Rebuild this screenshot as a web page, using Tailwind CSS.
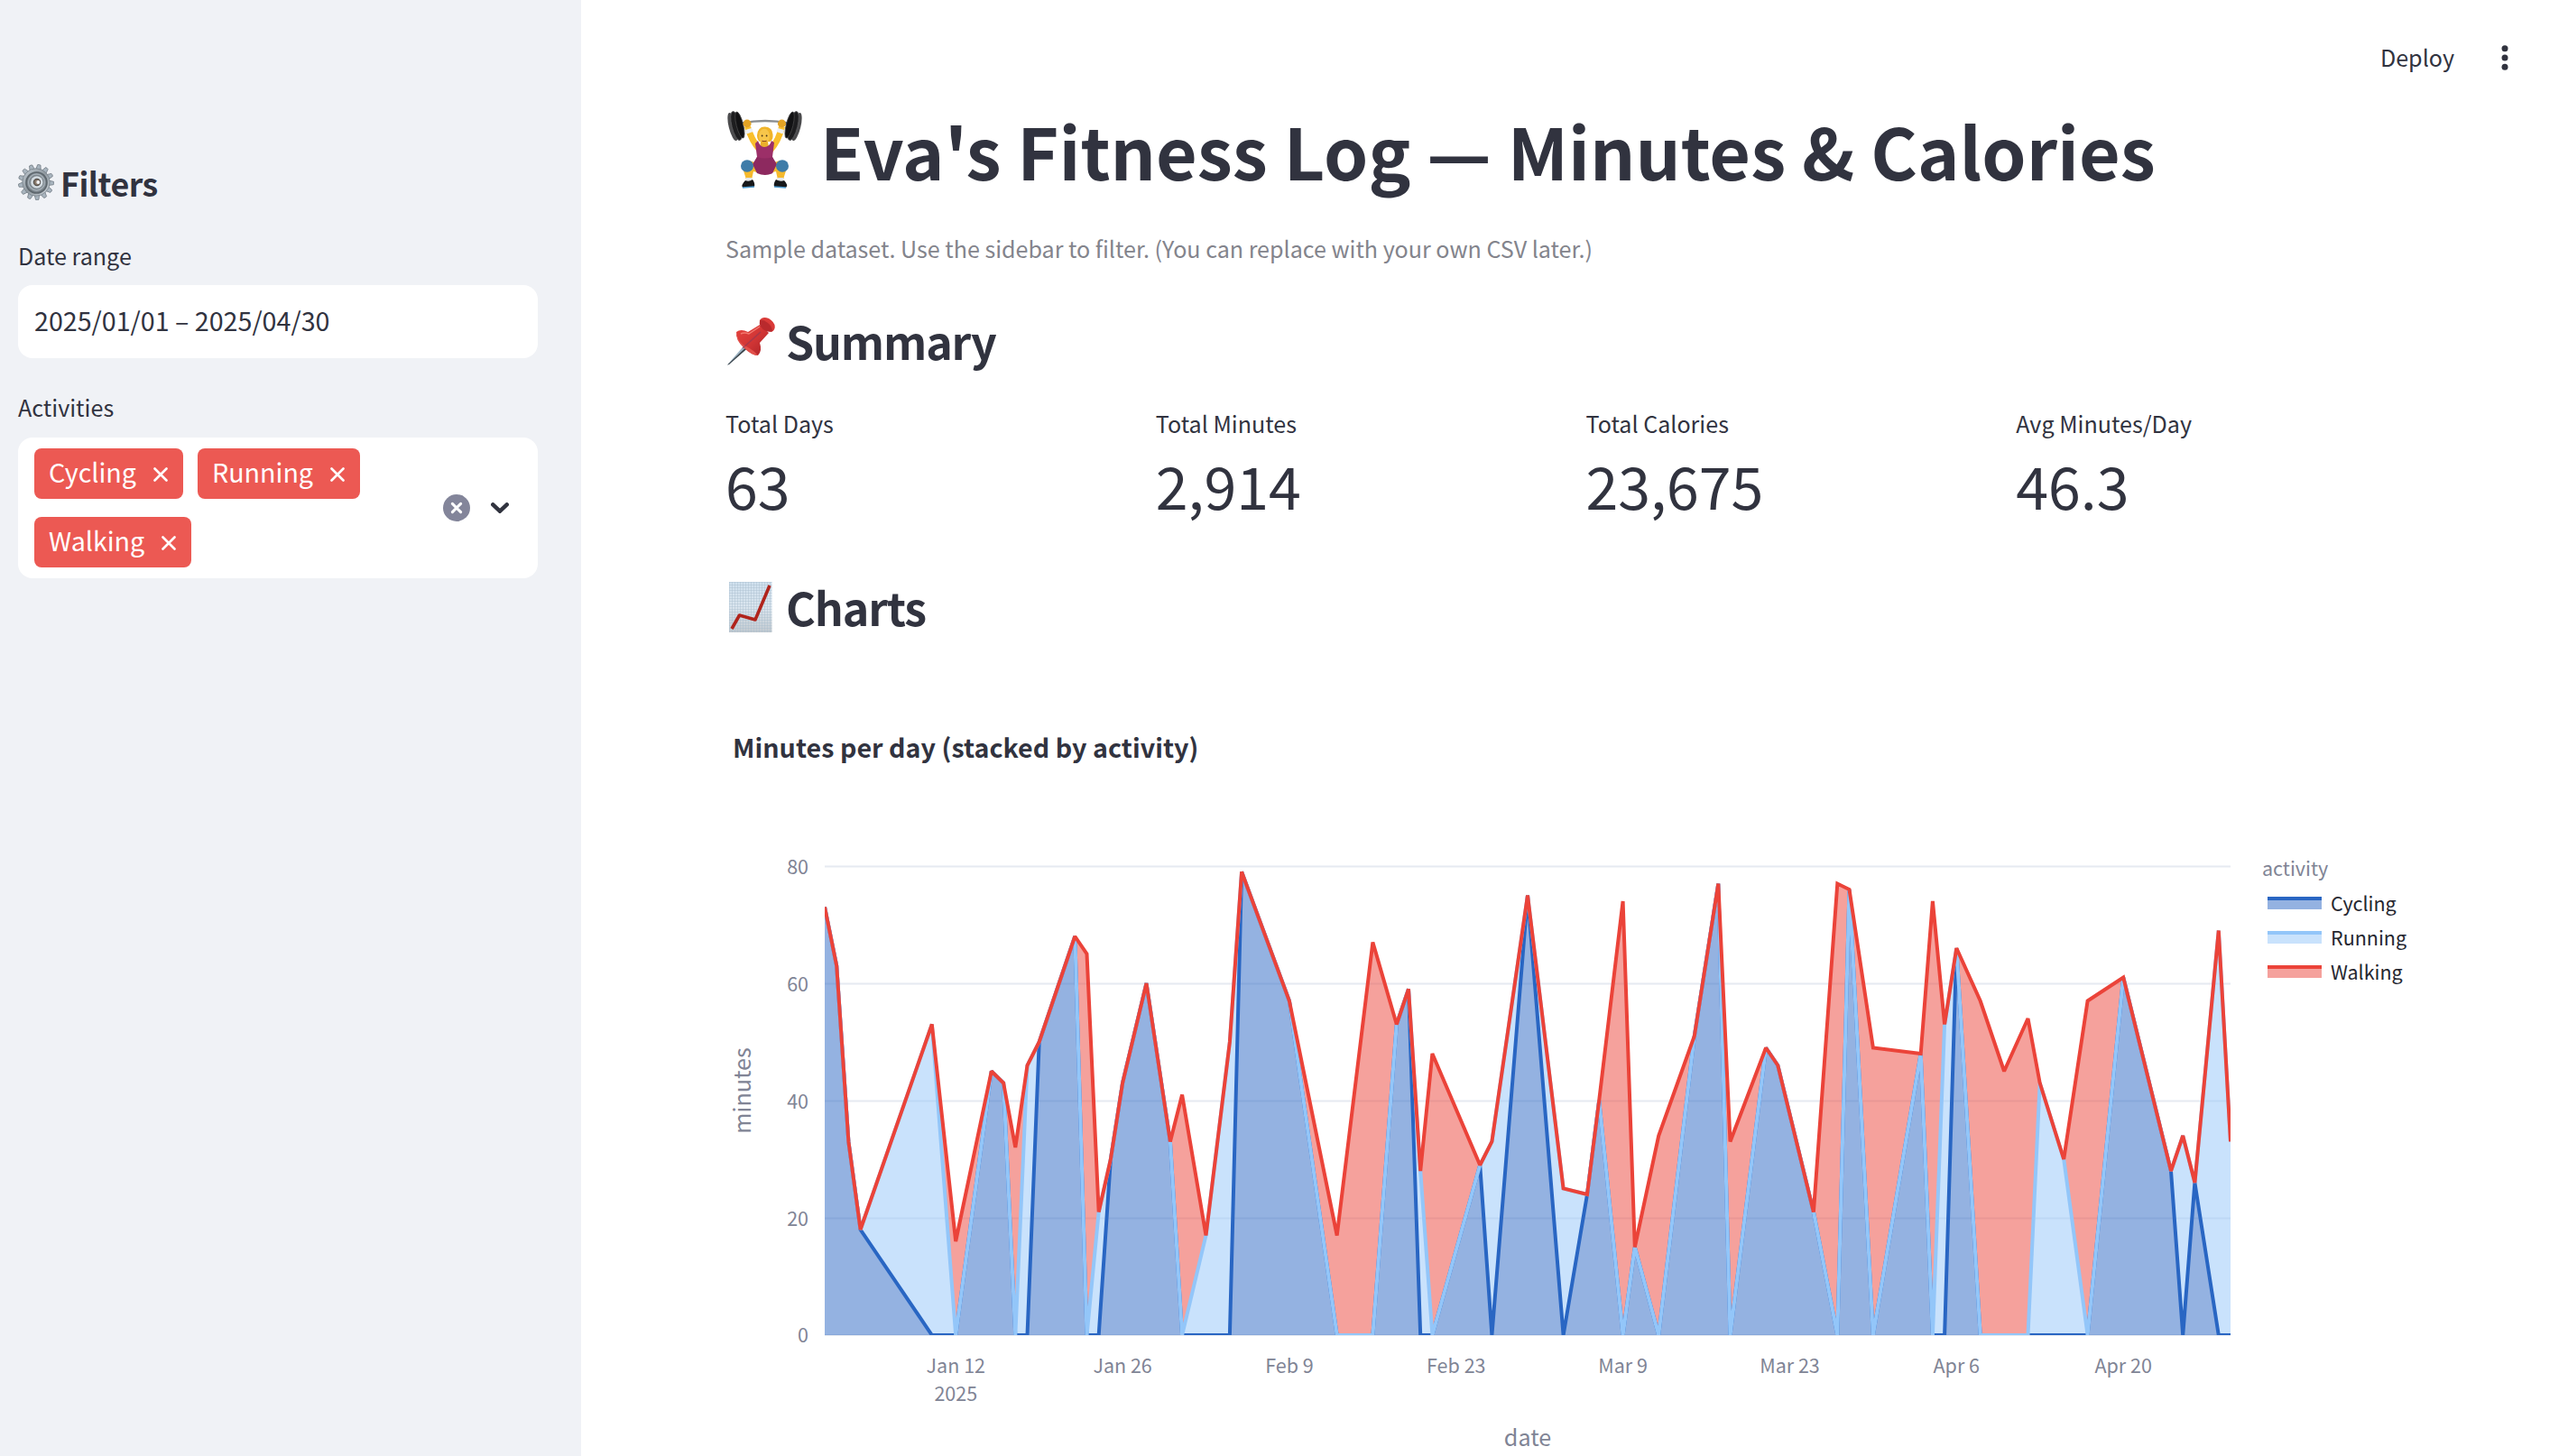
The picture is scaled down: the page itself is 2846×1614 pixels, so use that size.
<!DOCTYPE html>
<html lang="en">
<head>
<meta charset="utf-8">
<title>Eva's Fitness Log</title>
<script src="https://cdn.jsdelivr.net/npm/@tailwindcss/browser@4"></script>
</head>
<body class="bg-white">
<div class="flex w-[2846px] h-[1614px] overflow-hidden bg-white text-[#31333f] font-['Noto_Sans_CJK_SC','Noto_Sans',sans-serif]">

  <aside class="w-[644px] h-full shrink-0 bg-[#f0f2f6] pl-5 pr-12 pt-[178px]">
    <h2 class="flex items-center h-12 leading-[48px] text-[35.8px] font-bold whitespace-nowrap tracking-[-0.5px]">
      <svg class="size-10 mr-[7px]" viewBox="0 0 40 40">
        <defs>
          <linearGradient id="gearBody" x1="0" y1="0" x2="1" y2="1"><stop offset="0" stop-color="#c3ccd4"/><stop offset=".5" stop-color="#8f989f"/><stop offset="1" stop-color="#d5dce2"/></linearGradient>
        </defs>
        <g id="gearTeeth" fill="#a9b5bf" stroke="#5f6870" stroke-width=".6"></g>
        <circle cx="20" cy="20" r="15.2" fill="url(#gearBody)" stroke="#77818a" stroke-width=".8"/>
        <circle cx="20.5" cy="20.5" r="11.5" fill="#7d868d" stroke="#5c656c" stroke-width="1.6"/>
        <circle cx="20.5" cy="20" r="9" fill="none" stroke="#a5afb7" stroke-width="1.4"/>
        <circle cx="20.8" cy="20" r="6.8" fill="#d3dbe1"/>
        <circle cx="21" cy="20" r="3.6" fill="#8a7a6c" stroke="#55504c" stroke-width="1.2"/>
        <circle cx="22.3" cy="20" r="2" fill="#f0f2f6"/>
      </svg>
      <span>Filters</span>
    </h2>
    <div class="mt-[37px] h-10 leading-10 text-[25.1px]">Date range</div>
    <div class="mt-[13px] h-[81px] rounded-2xl bg-white px-[18px] pb-0.5 flex items-center text-[28.65px] whitespace-nowrap">2025/01/01 – 2025/04/30</div>
    <div class="mt-[34px] h-10 leading-10 text-[25.1px]">Activities</div>
    <div class="mt-[14px] h-[156px] rounded-2xl bg-white pl-[18px] pr-8 flex items-center">
      <div class="flex flex-wrap gap-x-4 gap-y-5 w-[440px] text-[28.65px] leading-[51px] text-white">
        <div class="h-14 w-[165px] rounded-lg bg-[#ec5953] pl-4 pr-[17px] flex justify-between items-start"><span>Cycling</span><svg class="size-4 mt-[21px]" viewBox="0 0 16 16"><path d="M1.5 1.5l13 13M14.5 1.5l-13 13" stroke="#fff" stroke-width="2.6" stroke-linecap="round"/></svg></div>
        <div class="h-14 w-[180px] rounded-lg bg-[#ec5953] pl-4 pr-[17px] flex justify-between items-start"><span>Running</span><svg class="size-4 mt-[21px]" viewBox="0 0 16 16"><path d="M1.5 1.5l13 13M14.5 1.5l-13 13" stroke="#fff" stroke-width="2.6" stroke-linecap="round"/></svg></div>
        <div class="h-14 w-[174px] rounded-lg bg-[#ec5953] pl-4 pr-[17px] flex justify-between items-start"><span>Walking</span><svg class="size-4 mt-[21px]" viewBox="0 0 16 16"><path d="M1.5 1.5l13 13M14.5 1.5l-13 13" stroke="#fff" stroke-width="2.6" stroke-linecap="round"/></svg></div>
      </div>
      <svg class="size-[30px] ml-[13px]" viewBox="0 0 30 30"><circle cx="15" cy="15" r="15" fill="#83859a"/><path d="M10.4 10.4l9.2 9.2M19.6 10.4l-9.2 9.2" stroke="#fff" stroke-width="3" stroke-linecap="round"/></svg>
      <svg class="w-5 h-3 ml-[23px]" viewBox="0 0 20 12"><path d="M2.3 2.3l7.7 7.4 7.7-7.4" fill="none" stroke="#31333f" stroke-width="4.4" stroke-linecap="round" stroke-linejoin="miter"/></svg>
    </div>
  </aside>

  <main class="flex-1 pl-40 flex flex-col">
    <header class="h-[113px] flex justify-end pr-[66px] pt-[43px] text-[25.1px] leading-10">
      <span class="mr-[52px]">Deploy</span>
      <svg class="w-2 h-[30px] mt-[6px]" viewBox="0 0 8 30" fill="#31333f"><circle cx="4" cy="4.7" r="3.5"/><circle cx="4" cy="15" r="3.5"/><circle cx="4" cy="25.2" r="3.5"/></svg>
    </header>

    <h1 class="flex items-center h-[106px] leading-[106px] text-[78.8px] font-bold whitespace-nowrap">
      <svg class="w-[84px] h-[88px] ml-[2px] mr-[19px]" viewBox="0 0 84 88">
        <path d="M16 14.5Q42 9.5 68 14.5" fill="none" stroke="#8a8d90" stroke-width="2.6"/>
        <path d="M13 15h7M64 15h7" stroke="#2f5fb8" stroke-width="3"/>
        <g transform="rotate(-14 10 17.500)"><ellipse cx="6" cy="17.5" rx="4.4" ry="16" fill="#4b4b4d"/><ellipse cx="10" cy="17.5" rx="5" ry="16.5" fill="#1d1d1f" stroke="#5a5a5c" stroke-width=".8"/><ellipse cx="14" cy="17.5" rx="3.8" ry="15" fill="#121214" stroke="#444" stroke-width=".8"/></g>
        <g transform="rotate(14 73 17.500)"><ellipse cx="77" cy="17.5" rx="4.4" ry="16" fill="#4b4b4d"/><ellipse cx="73" cy="17.5" rx="5" ry="16.5" fill="#1d1d1f" stroke="#5a5a5c" stroke-width=".8"/><ellipse cx="69" cy="17.5" rx="3.8" ry="15" fill="#121214" stroke="#444" stroke-width=".8"/></g>
        <path d="M19 19L26 18Q30 31 36 38L34 47Q24 36 19 19Z" fill="#f9bf2c"/>
        <path d="M64 19L57 18Q54 31 48 38L50 47Q60 36 64 19Z" fill="#f9bf2c"/>
        <path d="M20 22l7-2 1.5 4-7 2.5zM63 22l-7-2-1.5 4 7 2.5z" fill="#eef1f5"/>
        <ellipse cx="22" cy="15" rx="4.6" ry="4.4" fill="#e3a325"/><ellipse cx="60.5" cy="15" rx="4.6" ry="4.4" fill="#e3a325"/>
        <path d="M33 28Q34 18 42 18.5Q50 19 50.5 27Q51 33 47.5 35L36 35Q33 33 33 28Z" fill="#f0b429"/>
        <ellipse cx="41" cy="29" rx="6" ry="8.3" fill="#f7c64a"/>
        <circle cx="38.6" cy="28.5" r=".9" fill="#4a3418"/><circle cx="43.6" cy="28.5" r=".9" fill="#4a3418"/>
        <path d="M38.5 33.5q2.5 1 5 0v1.5q-2.5 1.500-5 0z" fill="#8c4a20"/>
        <path d="M37 35h8l1 6h-10z" fill="#eab02c"/>
        <path d="M24 56Q17 58 17 64L21 77H27L29 68L36 70H47L54 68L56 77H62L66 64Q65 57 58 56L49 59H34Z" fill="#f5b92c"/>
        <path d="M34 34Q36 41 41 41Q47 41 49 34L52 36L50 52L53 60L50 70Q42 73 33 69L29 60L33 52L31 37Z" fill="#9c2f68"/>
        <path d="M33 52Q42 55 50 52L55 60L50 70Q42 74 33 70L28 60Z" fill="#8d295f"/>
        <ellipse cx="22" cy="62" rx="7" ry="6.8" fill="#3e7ca8"/><ellipse cx="61" cy="62" rx="7" ry="6.8" fill="#3e7ca8"/>
        <path d="M21 75h6v5h-6zM56 75h6v5h-6z" fill="#e4e8ec"/>
        <path d="M20 78Q24 80 28 77Q31 81 30 85L17 86Q15 83 20 78ZM63 78Q59 80 54 77Q51 81 52 85L65 86Q68 83 63 78Z" fill="#17181a"/>
        <path d="M17 86L30 85M65 86L52 85" stroke="#4d9bd0" stroke-width="1.6"/>
      </svg>
      <span>Eva's Fitness Log — Minutes &amp; Calories</span>
    </h1>
    <p class="mt-[34px] h-11 leading-[44px] text-[25.1px] text-[#83848c] whitespace-nowrap tracking-[-0.02px]">Sample dataset. Use the sidebar to filter. (You can replace with your own CSV later.)</p>

    <h2 class="mt-[46px] flex items-center h-[68px] leading-[68px] text-[50.1px] font-bold tracking-[-1.15px]">
      <svg class="w-[54px] h-[54px] ml-px mt-[2px] mr-3" viewBox="0 0 54 54">
        <defs><linearGradient id="pin" x1="0" y1="0" x2="1" y2="1"><stop offset="0" stop-color="#e8453f"/><stop offset=".55" stop-color="#cf3434"/><stop offset="1" stop-color="#a92228"/></linearGradient></defs>
        <path d="M24 27L28 31L3 53L1 53.5Z" fill="#9db4c4"/>
        <path d="M26 30L28 31L3 53L1 53.5Z" fill="#3c4348"/>
        <path d="M11 17Q16 13 24 17L37 9L47 18L37 29Q40 38 35 43Q28 43 19 34Q11 26 11 17Z" fill="url(#pin)"/>
        <path d="M11 17Q13 29 22 33Q30 37 35 43Q28 43 19 34Q10 26 11 17Z" fill="#e2504a"/>
        <path d="M37 4Q40 -1 47 2Q55 7 53.5 13Q52 18 47 16Q37 13 37 4Z" fill="#d93a38"/>
        <path d="M37 4Q41 3 46 7Q51 11 51 16.5Q43 18 38 11Q36 8 37 4Z" fill="#b92a2d"/>
        <path d="M16 19Q20 17 25 19L37 11" stroke="#f37a70" stroke-width="1.5" fill="none"/>
        <path d="M18 35L38 17" stroke="#8d3a58" stroke-width="1.6" opacity=".6"/>
      </svg>
      <span>Summary</span>
    </h2>
    <section class="mt-9 grid grid-cols-4 gap-8 w-[1875px] text-[25.1px] leading-[44px]">
      <div><div>Total Days</div><div class="mt-[2px] text-[64.5px] leading-[88px]">63</div></div>
      <div><div>Total Minutes</div><div class="mt-[2px] text-[64.5px] leading-[88px]">2,914</div></div>
      <div><div>Total Calories</div><div class="mt-[2px] text-[64.5px] leading-[88px]">23,675</div></div>
      <div><div>Avg Minutes/Day</div><div class="mt-[2px] text-[64.5px] leading-[88px]">46.3</div></div>
    </section>
    <h2 class="mt-[57px] flex items-center h-[68px] leading-[68px] text-[50.1px] font-bold tracking-[-1.1px]">
      <svg class="w-[54px] h-[56px] ml-px mt-[2px] mr-3" viewBox="0 0 54 56">
        <defs>
          <linearGradient id="paper" x1="0" y1="0" x2="0" y2="1"><stop offset="0" stop-color="#cfe0ee"/><stop offset=".5" stop-color="#dae5ee"/><stop offset="1" stop-color="#c3cad0"/></linearGradient>
          <pattern id="lines" width="3" height="3" patternUnits="userSpaceOnUse"><path d="M0 .5H3M.5 0V3" stroke="#a9bdcc" stroke-width=".4"/></pattern>
        </defs>
        <rect x="3" width="47.5" height="56" fill="url(#paper)"/><rect x="3" width="47.5" height="56" fill="url(#lines)"/>
        <path d="M6 52L14.5 37L32 42L48 4" fill="none" stroke="#b0241c" stroke-width="3.6" stroke-linejoin="round"/>
      </svg>
      <span>Charts</span>
    </h2>

    <svg class="block w-[1875px] h-[908px] shrink-0" viewBox="804 706 1875 908" fill="#808495" font-size="21.5">
      <defs><clipPath id="plot"><rect x="914" y="950" width="1558" height="530"/></clipPath></defs>
      <text x="812" y="839.7" font-size="28.65" font-weight="700" fill="#31333f" letter-spacing=".04">Minutes per day (stacked by activity)</text>
      <path d="M914 960.5H2472M914 1090.5H2472M914 1220.5H2472M914 1350.5H2472M914 1480H2472" stroke="#e6eaf1" stroke-width="2"/>
      <g clip-path="url(#plot)" id="areas" fill="none" stroke-width="4" stroke-miterlimit="2"></g>
      <g text-anchor="end">
        <text x="896" y="969">80</text><text x="896" y="1099">60</text><text x="896" y="1229">40</text><text x="896" y="1359">20</text><text x="896" y="1488">0</text>
      </g>
      <g text-anchor="middle">
        <text x="1059.3" y="1521.5">Jan 12</text><text x="1059.3" y="1552.5">2025</text>
        <text x="1244.1" y="1521.5">Jan 26</text><text x="1429" y="1521.5">Feb 9</text>
        <text x="1613.8" y="1521.5">Feb 23</text><text x="1798.6" y="1521.5">Mar 9</text>
        <text x="1983.5" y="1521.5">Mar 23</text><text x="2168.3" y="1521.5">Apr 6</text><text x="2353.2" y="1521.5">Apr 20</text>
        <text x="1693" y="1602.5" font-size="25.1">date</text>
        <text transform="translate(832 1209) rotate(-90)" font-size="25.1">minutes</text>
      </g>
      <text x="2507" y="970.5">activity</text>
      <g fill="#262730">
        <rect x="2513" y="996" width="60" height="12" fill="#94b2e1"/><rect x="2513" y="994" width="60" height="4" fill="#2966c3"/><text x="2583" y="1010.3">Cycling</text>
        <rect x="2513" y="1034" width="60" height="12" fill="#c9e2fc"/><rect x="2513" y="1032" width="60" height="4" fill="#93c6f9"/><text x="2583" y="1048.3">Running</text>
        <rect x="2513" y="1072" width="60" height="12" fill="#f5a19c"/><rect x="2513" y="1070" width="60" height="4" fill="#eb4339"/><text x="2583" y="1086.2">Walking</text>
      </g>
    </svg>
  </main>
</div>
<script>
  const NS = 'http://www.w3.org/2000/svg';
  const add = (parent, tag, attrs) => {
    const el = document.createElementNS(NS, tag);
    for (const k in attrs) el.setAttribute(k, attrs[k]);
    parent.appendChild(el);
  };

  // Gear teeth, thirteen around the rim
  for (let i = 0; i < 13; i++)
    add(document.getElementById('gearTeeth'), 'path', { d: 'M17.2 6L18.3 .6Q20 -.2 21.7 .6L22.8 6Z', transform: `rotate(${i * 27.7 + 10} 20 20)` });

  // [day offset from Jan 1, minutes, activity]
  const log = [[0,73,'C'],[1,63,'C'],[2,33,'C'],[3,18,'C'],[9,53,'R'],[11,16,'W'],[14,45,'C'],[15,43,'C'],[16,32,'W'],[17,46,'R'],[18,50,'C'],[21,68,'C'],[22,65,'W'],[23,21,'R'],[24,30,'C'],[25,43,'C'],[27,60,'C'],[29,33,'C'],[30,41,'W'],[32,17,'R'],[34,50,'R'],[35,79,'C'],[39,57,'C'],[43,17,'W'],[46,67,'W'],[48,53,'C'],[49,59,'C'],[50,28,'R'],[51,48,'W'],[55,29,'C'],[56,33,'R'],[59,75,'C'],[62,25,'R'],[64,24,'C'],[65,40,'C'],[67,74,'W'],[68,15,'C'],[70,34,'W'],[73,51,'C'],[75,77,'C'],[76,33,'W'],[79,49,'C'],[80,46,'C'],[83,21,'C'],[85,77,'W'],[86,76,'C'],[88,49,'W'],[92,48,'C'],[93,74,'W'],[94,53,'R'],[95,66,'C'],[97,57,'W'],[99,45,'W'],[101,54,'W'],[102,43,'R'],[104,30,'R'],[106,57,'W'],[109,61,'C'],[113,28,'C'],[114,34,'R'],[115,26,'C'],[117,69,'R'],[118,33,'R']];
  const x = d => 914 + d * 1558 / 118, y = v => 1480 - v * 6.5;
  const line = kinds => log.map(([d, v, k]) => `${x(d).toFixed(1)} ${y(kinds.includes(k) ? v : 0)}`);
  const c = line('C'), r = line('CR'), w = line('CRW');
  const base = ['2472 1480', '914 1480'];
  const areas = document.getElementById('areas');
  [[c, base, '#2966c3'], [r, [...c].reverse(), '#93c6f9'], [w, [...r].reverse(), '#eb4339']].forEach(([top, bottom, color]) =>
    add(areas, 'path', { d: 'M' + [...top, ...bottom].join('L') + 'Z', fill: color, 'fill-opacity': .5 }));
  [[c, '#2966c3'], [r, '#93c6f9'], [w, '#eb4339']].forEach(([p, color]) =>
    add(areas, 'path', { d: 'M' + p.join('L'), stroke: color }));
</script>
</body>
</html>
